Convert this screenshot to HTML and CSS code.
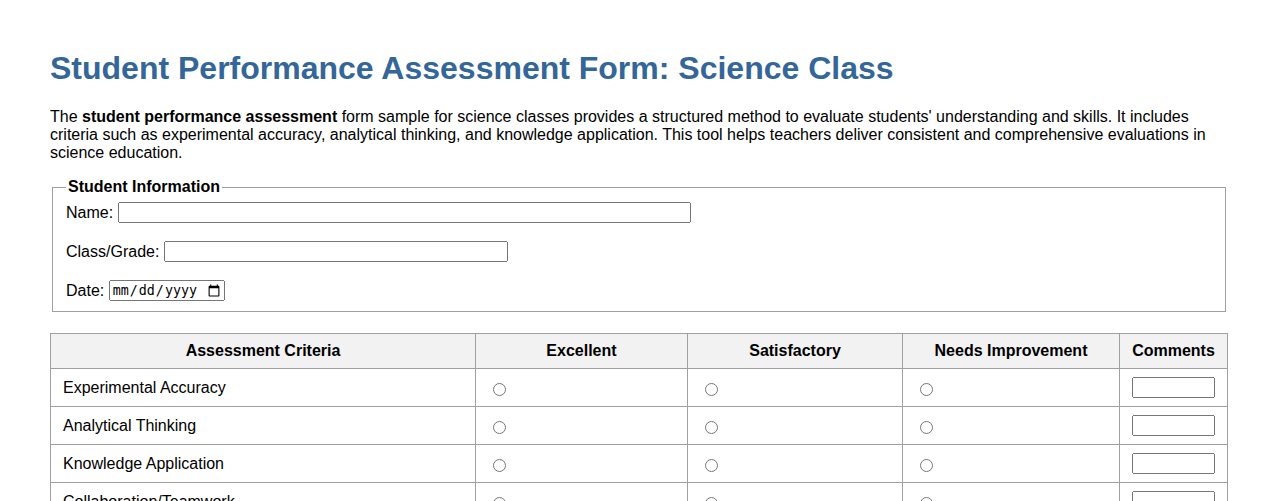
FILE: index.html
```html
<!DOCTYPE html>
<html lang="en">
<head>
<meta charset="utf-8">
<title>Student Performance Assessment Form: Science Class</title>
<link rel="stylesheet" href="styles.css">
</head>
<body>
<h1 class="title">Student Performance Assessment Form: Science Class</h1>
<p class="intro">The <strong>student performance assessment</strong> form sample for science classes provides a structured method to evaluate students' understanding and skills. It includes criteria such as experimental accuracy, analytical thinking, and knowledge application. This tool helps teachers deliver consistent and comprehensive evaluations in science education.</p>
<form>
<fieldset class="info">
<legend class="info-legend">Student Information</legend>
<div class="rows">
<div class="row"><label for="name">Name:</label> <input type="text" id="name" class="in-name"></div>
<div class="row"><label for="grade">Class/Grade:</label> <input type="text" id="grade" class="in-grade"></div>
<div class="row"><label for="date">Date:</label> <input type="date" id="date" class="in-date"></div>
</div>
</fieldset>
<table class="grid">
<colgroup>
<col class="c1"><col class="c2"><col class="c3"><col class="c4"><col class="c5">
</colgroup>
<thead>
<tr><th>Assessment Criteria</th><th>Excellent</th><th>Satisfactory</th><th>Needs Improvement</th><th>Comments</th></tr>
</thead>
<tbody>
<tr><td>Experimental Accuracy</td><td><input type="radio" name="r1"></td><td><input type="radio" name="r1"></td><td><input type="radio" name="r1"></td><td><input type="text" class="comment"></td></tr>
<tr><td>Analytical Thinking</td><td><input type="radio" name="r2"></td><td><input type="radio" name="r2"></td><td><input type="radio" name="r2"></td><td><input type="text" class="comment"></td></tr>
<tr><td>Knowledge Application</td><td><input type="radio" name="r3"></td><td><input type="radio" name="r3"></td><td><input type="radio" name="r3"></td><td><input type="text" class="comment"></td></tr>
<tr><td>Collaboration/Teamwork</td><td><input type="radio" name="r4"></td><td><input type="radio" name="r4"></td><td><input type="radio" name="r4"></td><td><input type="text" class="comment"></td></tr>
<tr><td>Communication Skills</td><td><input type="radio" name="r5"></td><td><input type="radio" name="r5"></td><td><input type="radio" name="r5"></td><td><input type="text" class="comment"></td></tr>
</tbody>
</table>
</form>
</body>
</html>
```
FILE: styles.css
```css
body {
  margin: 50px;
  font-family: "Liberation Sans", Arial, sans-serif;
  font-size: 16px;
  color: #000;
  background: #fff;
}
.title {
  font-size: 32px;
  font-weight: bold;
  color: #336699;
  margin: 0 0 21px 0;
}
.intro {
  margin: 0 0 16px 0;
  line-height: 18px;
}
.info {
  margin: 0 2px;
  padding: 6px 13px 10px 13px;
  border: 1px solid #a0a0a0;
}
.info-legend {
  font-weight: bold;
  padding: 0 2px;
}
.rows {
  display: flex;
  flex-direction: column;
  gap: 18px;
}
.row {
  display: block;
  height: 21px;
  line-height: 21px;
}
.row input {
  vertical-align: top;
}
.in-name {
  width: 573px;
  box-sizing: border-box;
}
.in-grade {
  width: 344px;
  box-sizing: border-box;
}
.in-date {
  width: 116px;
  box-sizing: border-box;
}
.grid {
  width: 100%;
  border-collapse: collapse;
  table-layout: fixed;
  margin-top: 21px;
}
.c1 { width: 425px; }
.c2 { width: 212px; }
.c3 { width: 215px; }
.c4 { width: 217px; }
.grid th,
.grid td {
  border: 1px solid #a0a0a0;
  padding: 8px 12px;
  text-align: left;
}
.grid th {
  background: #f2f2f2;
  text-align: center;
  font-weight: bold;
}
.grid input[type="radio"] {
  vertical-align: -3px;
}
.comment {
  width: 83px;
  box-sizing: border-box;
}
```
